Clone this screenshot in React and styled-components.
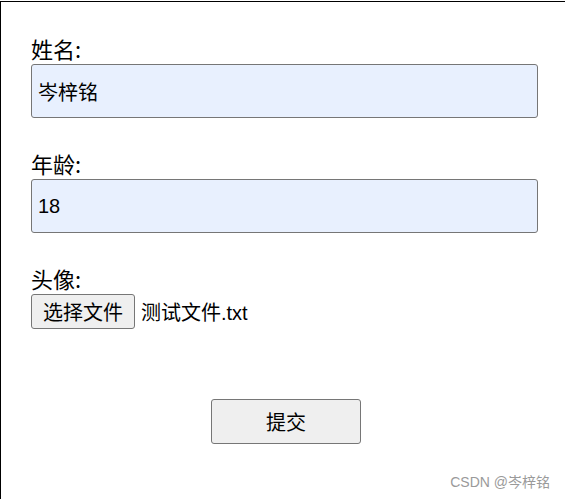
import React from "react";
import styled, { createGlobalStyle } from "styled-components";

const GlobalStyle = createGlobalStyle`
  html, body {
    margin: 0;
    padding: 0;
    background: #fff;
  }
  body {
    font-family: "Liberation Sans", "Noto Sans CJK SC", sans-serif;
    color: #000;
  }
`;

export default function App() {
  return (
    <>
      <GlobalStyle />
      <Frame>
        <Form onSubmit={(e) => e.preventDefault()}>
          <Field>
            <Label htmlFor="name">姓名:</Label>
            <TextInput id="name" type="text" defaultValue="岑梓铭" />
          </Field>

          <Field>
            <Label htmlFor="age">年龄:</Label>
            <TextInput id="age" type="text" defaultValue="18" />
          </Field>

          <Field>
            <Label>头像:</Label>
            <FileRow>
              <FileButton type="button">选择文件</FileButton>
              <FileName>测试文件.txt</FileName>
            </FileRow>
          </Field>

          <SubmitRow>
            <SubmitButton type="submit">提交</SubmitButton>
          </SubmitRow>
        </Form>
        <Watermark>CSDN @岑梓铭</Watermark>
      </Frame>
    </>
  );
}

const Frame = styled.div`
  position: relative;
  box-sizing: border-box;
  height: 498px;
  margin-top: 1px;
  border-top: 1px solid #000;
  border-left: 1px solid #000;
  padding: 32px 26px 0 30px;
`;

const Form = styled.form`
  display: flex;
  flex-direction: column;
  gap: 31px;
`;

const Field = styled.div`
  display: flex;
  flex-direction: column;
  align-items: flex-start;
`;

const Label = styled.label`
  font-family: "Noto Sans CJK SC", sans-serif;
  font-size: 22px;
  line-height: 28px;
  margin-bottom: 2px;
`;

const TextInput = styled.input`
  box-sizing: border-box;
  width: 507px;
  height: 54px;
  padding: 0 6px;
  border: 1px solid #767676;
  border-radius: 3px;
  background: #e8f0fe;
  font-family: "Liberation Sans", "Noto Sans CJK SC", sans-serif;
  font-size: 20px;
  color: #000;
  outline: none;
`;

const FileRow = styled.div`
  display: flex;
  align-items: center;
  gap: 6px;
`;

const FileButton = styled.button`
  box-sizing: border-box;
  width: 104px;
  height: 35px;
  padding: 0;
  border: 1px solid #767676;
  border-radius: 3px;
  background: #efefef;
  font-family: "Liberation Sans", "Noto Sans CJK SC", sans-serif;
  font-size: 20px;
  color: #000;
`;

const FileName = styled.span`
  font-family: "Liberation Sans", "Noto Sans CJK SC", sans-serif;
  font-size: 20px;
`;

const SubmitRow = styled.div`
  display: flex;
  justify-content: center;
  padding-top: 39px;
  padding-left: 2px;
`;

const SubmitButton = styled.button`
  box-sizing: border-box;
  width: 150px;
  height: 45px;
  border: 1px solid #767676;
  border-radius: 3px;
  background: #efefef;
  font-family: "Noto Sans CJK SC", sans-serif;
  font-size: 20px;
  color: #000;
`;

const Watermark = styled.div`
  position: absolute;
  right: 15px;
  bottom: 8px;
  font-family: "Liberation Sans", "Noto Sans CJK SC", sans-serif;
  font-size: 14px;
  color: #9a9a9a;
`;
